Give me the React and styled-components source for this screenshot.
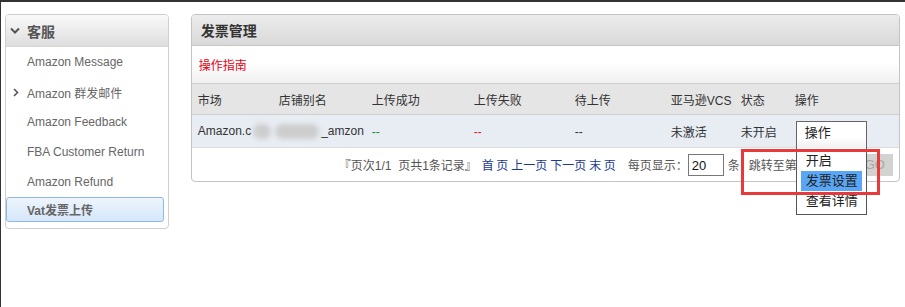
import styled, { createGlobalStyle } from "styled-components";

const GlobalStyle = createGlobalStyle`
  html, body { margin: 0; padding: 0; background: #fff; }
  body {
    font-family: "Liberation Sans", "Noto Sans CJK SC", Arial, sans-serif;
    font-size: 12px;
    color: #333;
  }
`;

const Page = styled.div`
  box-sizing: border-box;
  height: 307px;
  border-top: 2px solid #333;
  border-left: 1px solid #333;
  padding: 12px 5px 0 4px;
  display: flex;
  align-items: flex-start;
  gap: 22px;
`;

const Sidebar = styled.aside`
  box-sizing: border-box;
  width: 164px;
  height: 215px;
  border: 1px solid #cfcfcf;
  border-radius: 4px;
  background: #fff;
  display: flex;
  flex-direction: column;
`;

const SideHeader = styled.div`
  height: 31px;
  display: flex;
  align-items: center;
  gap: 7px;
  padding-left: 4px;
  background: linear-gradient(#f9f9f9, #dedede);
  border-bottom: 1px solid #d6d6d6;
  border-radius: 3px 3px 0 0;
  font-size: 14px;
  font-weight: bold;
  color: #555;
`;

const SideItem = styled.div`
  position: relative;
  box-sizing: border-box;
  height: ${(p) => (p.$active ? "25px" : "30px")};
  margin-right: ${(p) => (p.$active ? "4px" : "0")};
  display: flex;
  align-items: center;
  padding-left: ${(p) => (p.$active ? "20px" : "21px")};
  color: #666;
  font-size: 12px;
  font-weight: ${(p) => (p.$active ? "bold" : "normal")};
  border: ${(p) => (p.$active ? "1px solid #8fb8e4" : "none")};
  border-radius: 3px;
  background: ${(p) =>
    p.$active ? "linear-gradient(#eef5fd, #d5e7fa)" : "transparent"};
`;

const Arrow = styled.svg`
  position: absolute;
  left: 7px;
  top: 11px;
`;

const Main = styled.section`
  box-sizing: border-box;
  width: 710px;
  border: 1px solid #c4c4c4;
  border-radius: 4px;
  background: #fff;
`;

const MainHeader = styled.div`
  height: 30px;
  display: flex;
  align-items: center;
  padding-left: 9px;
  background: linear-gradient(#ececec, #d9d9d9);
  border-bottom: 1px solid #c6c6c6;
  border-radius: 3px 3px 0 0;
  font-size: 14px;
  font-weight: bold;
  color: #333;
`;

const Guide = styled.div`
  height: 38px;
  padding: 10px 0 0 7px;
  box-sizing: border-box;
  background: linear-gradient(#fff 45%, #f0f0f0);
  color: #e60012;
  font-size: 12px;
  border-bottom: 1px solid #cfcfcf;
`;

const Row = styled.div`
  display: grid;
  grid-template-columns: 81px 93px 102px 101px 96px 70px 54px 1fr;
  align-items: center;
  height: ${(p) => (p.$head ? "30px" : "32px")};
  padding-left: 6px;
  background: ${(p) => (p.$head ? "#e5e5e5" : "#e8edf3")};
  border-bottom: 1px solid ${(p) => (p.$head ? "#cfcfcf" : "#dcdcdc")};
  color: #333;
  font-size: 12px;
`;

const Cell = styled.span`
  color: ${(p) => p.$color || "#333"};
  white-space: nowrap;
  align-self: ${(p) => (p.$top ? "start" : "center")};
`;

const Blur = styled.span`
  display: inline-block;
  width: ${(p) => p.$w}px;
  height: 15px;
  vertical-align: middle;
  background: #cdcdcd;
  border-radius: 8px;
  filter: blur(2.5px);
  margin: 0 2px;
`;

const SelectWrap = styled.div`
  position: relative;
  width: 71px;
  margin-top: 6px;
  margin-left: 1px;
`;

const SelectBox = styled.div`
  box-sizing: border-box;
  height: 27px;
  border: 1px solid #666;
  border-bottom: none;
  background: linear-gradient(#fff 60%, #f0f0f0);
  padding: 1px 0 0 8px;
  font-size: 13px;
  line-height: 20px;
  color: #222;
`;

const Menu = styled.ul`
  position: absolute;
  left: 0;
  top: 100%;
  z-index: 3;
  box-sizing: border-box;
  width: 71px;
  margin: 0;
  padding: 3px 4px 3px;
  list-style: none;
  background: #fff;
  border: 1px solid #555;
  border-top: none;
`;

const MenuItem = styled.li`
  height: 20px;
  line-height: 20px;
  padding-left: 5px;
  font-size: 13px;
  color: #222;
  background: ${(p) => (p.$selected ? "#5aa6f6" : "transparent")};
`;

const Pager = styled.div`
  height: 33px;
  display: flex;
  align-items: center;
  padding-left: 147px;
  color: #555;
  font-size: 12px;
`;

const PagerText = styled.span`
  margin-left: ${(p) => p.$ml || 0}px;
  white-space: nowrap;
`;

const Links = styled.div`
  display: flex;
  gap: 3px;
  margin-left: ${(p) => p.$ml || 0}px;
`;

const PageLink = styled.a`
  color: #1a3a8f;
  text-decoration: none;
  white-space: nowrap;
`;

const Input = styled.div`
  box-sizing: border-box;
  width: ${(p) => p.$w}px;
  height: 22px;
  margin-left: ${(p) => p.$ml || 0}px;
  border: 1px solid #777;
  padding: 3px 0 0 3px;
  font-size: 13px;
  color: #111;
  background: #fff;
`;

const GoButton = styled.div`
  width: 36px;
  height: 22px;
  margin-left: 10px;
  background: #d2d2d2;
  color: #a6a6a6;
  font-size: 13px;
  display: flex;
  align-items: center;
  justify-content: center;
`;

const Highlight = styled.div`
  position: absolute;
  left: 741px;
  top: 149px;
  width: 133px;
  height: 40px;
  border: 3px solid #e83a3a;
  z-index: 4;
  pointer-events: none;
`;

const Wrapper = styled.div`
  position: relative;
`;

function ChevronDown() {
  return (
    <svg width="10" height="8" viewBox="0 0 10 8">
      <path d="M1 1.5 L5 5.5 L9 1.5" fill="none" stroke="#555" strokeWidth="2" />
    </svg>
  );
}

const items = [
  "Amazon Message",
  "Amazon 群发邮件",
  "Amazon Feedback",
  "FBA Customer Return",
  "Amazon Refund",
];

export default function App() {
  return (
    <Wrapper>
      <GlobalStyle />
      <Page>
        <Sidebar>
          <SideHeader>
            <ChevronDown />
            客服
          </SideHeader>
          {items.map((t, i) => (
            <SideItem key={t}>
              {i === 1 && (
                <Arrow width="6" height="9" viewBox="0 0 6 9">
                  <path d="M1 1 L4.5 4.5 L1 8" fill="none" stroke="#555" strokeWidth="1.6" />
                </Arrow>
              )}
              {t}
            </SideItem>
          ))}
          <SideItem $active>Vat发票上传</SideItem>
        </Sidebar>
        <Main>
          <MainHeader>发票管理</MainHeader>
          <Guide>操作指南</Guide>
          <Row $head>
            <Cell>市场</Cell>
            <Cell>店铺别名</Cell>
            <Cell>上传成功</Cell>
            <Cell>上传失败</Cell>
            <Cell>待上传</Cell>
            <Cell>亚马逊VCS</Cell>
            <Cell>状态</Cell>
            <Cell>操作</Cell>
          </Row>
          <Row>
            <Cell>
              Amazon.c<Blur $w={18} />
              <Blur $w={44} />_amzon
            </Cell>
            <Cell />
            <Cell $color="#2a8a2a">--</Cell>
            <Cell $color="#e02020">--</Cell>
            <Cell>--</Cell>
            <Cell>未激活</Cell>
            <Cell>未开启</Cell>
            <Cell $top>
              <SelectWrap>
                <SelectBox>操作</SelectBox>
                <Menu>
                  <MenuItem>开启</MenuItem>
                  <MenuItem $selected>发票设置</MenuItem>
                  <MenuItem>查看详情</MenuItem>
                </Menu>
              </SelectWrap>
            </Cell>
          </Row>
          <Pager>
            <PagerText>『页次1/1&nbsp;&nbsp;页共1条记录』</PagerText>
            <Links $ml={5}>
              <PageLink>首&#8201;页</PageLink>
              <PageLink>上一页</PageLink>
              <PageLink>下一页</PageLink>
              <PageLink>末&#8201;页</PageLink>
            </Links>
            <PagerText $ml={12}>每页显示：</PagerText>
            <Input $w={36}>20</Input>
            <PagerText $ml={4}>条</PagerText>
            <PagerText $ml={9}>跳转至第</PagerText>
            <Input $w={30} $ml={4} />
            <PagerText $ml={4}>页</PagerText>
            <GoButton>GO</GoButton>
          </Pager>
        </Main>
      </Page>
      <Highlight />
    </Wrapper>
  );
}
